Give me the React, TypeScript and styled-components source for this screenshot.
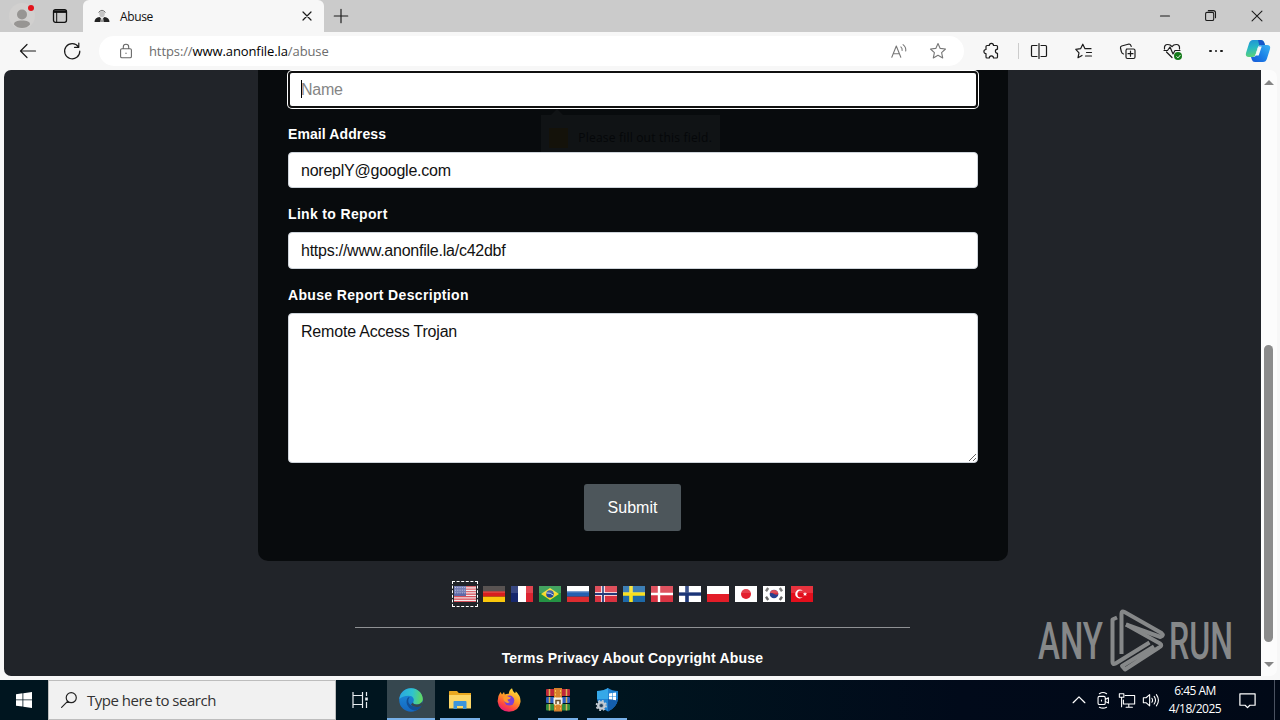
import { ReactNode } from "react";
import styled, { createGlobalStyle, css } from "styled-components";

const ui = `"Open Sans", "Noto Sans", sans-serif`;
const arial = `"Liberation Sans", Arial, sans-serif`;

const flags: { code: string; art: ReactNode }[] = [
  {
    code: "us",
    art: (
      <>
        <rect width="22" height="16" fill="#f4e9ea" />
        {[0, 2.5, 5, 7.5, 10, 12.5, 15].map((y) => (
          <rect key={y} y={y} width="22" height="1.3" fill="#d8505a" />
        ))}
        <rect width="12" height="10" fill="#5f69a8" />
        {[1.5, 4.2, 6.9].map((y) => (
          <path key={y} d={`M1 ${y}h11`} stroke="#b5bada" strokeDasharray="1 1.3" />
        ))}
      </>
    ),
  },
  {
    code: "de",
    art: (
      <>
        <rect width="22" height="6" fill="#3c3634" />
        <rect y="5.3" width="22" height="5.4" fill="#d81f1d" />
        <rect y="10.7" width="22" height="5.3" fill="#fbc80c" />
      </>
    ),
  },
  {
    code: "fr",
    art: (
      <>
        <rect width="22" height="16" fill="#fff" />
        <rect width="7" height="16" fill="#16276c" />
        <rect x="15" width="7" height="16" fill="#dc2431" />
      </>
    ),
  },
  {
    code: "br",
    art: (
      <>
        <rect width="22" height="16" fill="#249344" />
        <path d="M11 2l9 6-9 6-9-6z" fill="#f6db2c" />
        <circle cx="11" cy="8" r="3.8" fill="#28479a" />
        <path d="M7.5 7q4-.5 7 2.2" stroke="#c7dce8" fill="none" />
      </>
    ),
  },
  {
    code: "ru",
    art: (
      <>
        <rect width="22" height="6" fill="#fff" />
        <rect y="5.3" width="22" height="5.4" fill="#2460b0" />
        <rect y="10.7" width="22" height="5.3" fill="#dc2c30" />
      </>
    ),
  },
  { code: "no", art: <Cross bg="#d93240" outer="#fff" inner="#253a79" /> },
  { code: "se", art: <Cross bg="#1d69a8" outer="#f8e020" /> },
  { code: "dk", art: <Cross bg="#d93443" outer="#fff" thin /> },
  { code: "fi", art: <Cross bg="#fff" outer="#1b3577" /> },
  {
    code: "pl",
    art: (
      <>
        <rect width="22" height="8" fill="#fff" />
        <rect y="8" width="22" height="8" fill="#e31d28" />
      </>
    ),
  },
  {
    code: "jp",
    art: (
      <>
        <rect width="22" height="16" fill="#fff" />
        <circle cx="11" cy="8" r="5" fill="#e3212e" />
      </>
    ),
  },
  {
    code: "kr",
    art: (
      <>
        <rect width="22" height="16" fill="#fff" />
        <circle cx="11" cy="8" r="4.3" fill="#28418f" />
        <path d="M6.800 7.300a4.300 4.300 0 018.500 1q-2.300 1-4.200-.3t-4.300-.7z" fill="#d6333f" />
        <path
          d="M3 5.200l2.200-3.200M16.800 2l2.200 3.200M3 10.800l2.200 3.200M16.800 14l2.200-3.200"
          stroke="#666"
          strokeWidth="2.400"
        />
      </>
    ),
  },
  {
    code: "tr",
    art: (
      <>
        <rect width="22" height="16" fill="#e30f1c" />
        <circle cx="8.600" cy="8" r="4.400" fill="#fff" />
        <circle cx="9.900" cy="8" r="3.500" fill="#e30f1c" />
        <path d="M14 5.900l.6 1.400 1.500.1-1.100 1 .3 1.500-1.300-.8-1.300.8.3-1.500-1.100-1 1.500-.1z" fill="#fff" />
      </>
    ),
  },
];

function Cross({ bg, outer, inner, thin }: { bg: string; outer: string; inner?: string; thin?: boolean }) {
  return (
    <>
      <rect width="22" height="16" fill={bg} />
      <path d="M8 0v16M0 8h22" stroke={outer} strokeWidth={thin ? 2.4 : 3.6} />
      {inner && <path d="M8 0v16M0 8h22" stroke={inner} strokeWidth="1.8" />}
    </>
  );
}

const Line = ({ d, size = 20, color = "#1b1b1b", w = 1.2 }: { d: string; size?: number; color?: string; w?: number }) => (
  <svg
    width={size}
    height={size}
    viewBox="0 0 20 20"
    fill="none"
    stroke={color}
    strokeWidth={w}
    strokeLinecap="round"
    strokeLinejoin="round"
  >
    <path d={d} />
  </svg>
);

const STAR = "M10 2.500l2.200 4.900 5.300.6-3.900 3.600 1.100 5.300L10 14.300l-4.700 2.600 1.100-5.300L2.500 8l5.300-.6z";

const ProfileIcon = () => (
  <svg width="28" height="28" viewBox="0 0 28 28">
    <circle cx="14" cy="14" r="13" fill="#d1d0cf" />
    <circle cx="14" cy="12.500" r="5" fill="#979593" />
    <path d="M6 22.500c0-3 3-4 8-4s8 1 8 4q-3 3.500-8 3.500t-8-3.500z" fill="#979593" />
    <circle cx="23" cy="6" r="3" fill="#e3131b" />
  </svg>
);

const Favicon = () => (
  <svg width="16" height="16" viewBox="0 0 16 16">
    <path d="M.5 14c0-3 2-4.500 5-5l2.500 2 2.500-2c3 .5 5 2 5 5z" fill="#222" />
    <path d="M5 4.500q3-3 6 0l-.6 3.200L8 10.500 5.600 7.700z" fill="#c4c4c4" />
    <path d="M4.500 4.500L6 3q2-1.500 4 0l1.500 1.500" stroke="#777" fill="none" />
    <path d="M7 9h2l.6 5H6.400z" fill="#e9e9e9" />
    <path d="M8 10l.7 3.500-.7.500-.7-.5z" fill="#444" />
  </svg>
);

const Copilot = () => (
  <svg width="26" height="26" viewBox="0 0 26 26">
    <defs>
      <linearGradient id="cpA" x1="0" y1="0" x2="0.200" y2="1">
        <stop offset="0" stopColor="#1f8fd8" />
        <stop offset=".5" stopColor="#27b8c4" />
        <stop offset="1" stopColor="#5bd17a" />
      </linearGradient>
      <linearGradient id="cpB" x1="1" y1="0" x2="0" y2="1">
        <stop offset="0" stopColor="#3cb4f2" />
        <stop offset=".5" stopColor="#1c83e8" />
        <stop offset="1" stopColor="#1656d6" />
      </linearGradient>
    </defs>
    <path d="M8 2h8q2.500 0 3.200 2.500L20 7h-4q-2.500 0-3.300 2.500L10.800 16q-.9 3-3.500 3H4q-4 0-3-4L4 5.500Q5 2 8 2z" fill="url(#cpA)" />
    <path d="M13 2h3q2.500 0 3.200 2.500L20 7h-4q-1 0-1.700.6z" fill="#1756c8" />
    <path d="M18 24h-8q-2.500 0-3.200-2.500L6 19h2q2.500 0 3.300-2.500L13.200 10q.9-3 3.500-3H22q4 0 3 4l-3 9.500Q21 24 18 24z" fill="url(#cpB)" />
    <path d="M13.500 8.500h3.200l-3 9H10.200z" fill="#f7f7f7" />
  </svg>
);

const EdgeLogo = () => (
  <svg width="24" height="24" viewBox="0 0 24 24">
    <defs>
      <linearGradient id="edA" x1="0" y1=".3" x2="1" y2=".4">
        <stop offset="0" stopColor="#2aa6e0" />
        <stop offset=".55" stopColor="#2fc3cf" />
        <stop offset="1" stopColor="#63d85c" />
      </linearGradient>
      <linearGradient id="edB" x1="0" y1="0" x2="0" y2="1">
        <stop offset="0" stopColor="#1d8fdc" />
        <stop offset="1" stopColor="#1467c0" />
      </linearGradient>
    </defs>
    <circle cx="12" cy="12" r="11.800" fill="url(#edB)" />
    <path d="M.3 11C1.200 4.500 6 .2 12 .2c6.500 0 11.800 5 11.800 10.800 0 3.500-2.800 5.500-6 5.500-2.800 0-4.300-1.200-3.600-2.300 1.800-2.800-.2-6.400-4.400-6.400-4.500 0-7.600 1.500-9.500 3.200z" fill="url(#edA)" />
    <path d="M9.300 9.300c-3.300 3-2.300 11 6 13.200 3 .2 6-2 7.400-5-6.500 3-13.500 0-13.400-4.500 0-1.600.6-2.700 1.600-3.400z" fill="#124f96" />
    <path d="M14.200 14.200c-.7 1.100.8 2.300 3.600 2.300 2.500 0 4.800-1.200 5.600-3.200v3.900c-4 2.800-9.600 2-11.500-.7z" fill="#36474f" />
  </svg>
);

const FolderIcon = () => (
  <svg width="22" height="20" viewBox="0 0 22 20">
    <path d="M0 1.500Q0 1 .6 1H8l1.800 2H22v15H0z" fill="#e9a820" />
    <path d="M0 5h22v13.500H0z" fill="#fcd667" />
    <path d="M4.500 19V12q0-1 1-1h11q1 0 1 1v7H14v-3H8v3z" fill="#3d94dc" />
  </svg>
);

const FirefoxIcon = () => (
  <svg width="24" height="24" viewBox="0 0 24 24">
    <defs>
      <linearGradient id="ffA" x1=".8" y1="0" x2=".3" y2="1">
        <stop offset="0" stopColor="#ffe83f" />
        <stop offset=".45" stopColor="#ff9a26" />
        <stop offset=".75" stopColor="#ff4a3e" />
        <stop offset="1" stopColor="#e5187c" />
      </linearGradient>
    </defs>
    <path d="M3.500 4l1.500 2.500 2-2.500.8 2.500q2-1 4-.8Q12 2 15 .3q.5 3 3 5 .8-.5.7-2Q24 8 23.500 14 22 23.500 12 23.800 2 23.500.6 13.500.5 8 3.500 4z" fill="url(#ffA)" />
    <circle cx="12.300" cy="12.600" r="5" fill="#7b3fd6" />
    <path d="M6.500 9q3-1.800 5.500 0l2 .5q-1 2-3.500 2 0 2 2.500 2.500-3 2-5.500-.5-1.500-2-1-4.500z" fill="#ff9a2c" />
  </svg>
);

const WinrarIcon = () => (
  <svg width="24" height="24" viewBox="0 0 24 24">
    <rect y="1" width="24" height="7" rx="1" fill="#c0283a" />
    <rect y="9" width="24" height="6" rx="1" fill="#2c5fc0" />
    <rect y="16" width="24" height="6.500" rx="1" fill="#2f8c3e" />
    <path
      d="M3.500 1v7M20.500 1v7M3.500 9v6M20.500 9v6M3.500 16v6.500M20.500 16v6.500"
      stroke="#d9b455"
      strokeWidth="1.500"
    />
    <rect x="8" width="8" height="23.500" fill="#d7812c" />
    <path d="M9.500 2v20M14.500 2v20" stroke="#f5c352" strokeDasharray="2 1.500" />
    <rect x="7.500" y="9.500" width="9" height="7" rx="1" fill="#f3f0e5" />
    <path d="M10 16v-3.500h4V16" stroke="#6b4e28" strokeWidth="1.500" fill="none" />
  </svg>
);

const DefenderIcon = () => (
  <svg width="24" height="24" viewBox="0 0 24 24">
    <path d="M13 0q4 3 10 3v8q-1 8-10 12.500Q3 19 2 11V3q7 0 11-3z" fill="#2083d3" />
    <path d="M13 0v11H2V3q7 0 11-3z" fill="#35a8e8" />
    <path d="M13 11h10q-1 8-10 12.500z" fill="#145fae" />
    <path d="M14 5.500l3-.5v3h-3zM17.600 4.900l3.400-.5V8h-3.400zM14 8.600h3v3l-3-.4zM17.600 8.600H21v3.600l-3.400-.5z" fill="#fff" />
    <circle cx="6.300" cy="17.500" r="3.300" fill="#8e9aa5" stroke="#c5ccd3" strokeWidth="2" />
    <circle cx="6.300" cy="17.500" r="4.800" fill="none" stroke="#c5ccd3" strokeWidth="1.600" strokeDasharray="2 1.770" />
    <circle cx="6.300" cy="17.500" r="1.500" fill="#20415f" />
  </svg>
);

const Watermark = () => (
  <svg width="222" height="64" viewBox="0 0 222 64" overflow="visible">
    <g fill="#868889" fontFamily="Roboto, sans-serif" fontSize="51" fontWeight="500">
      <text x="-1" y="50" textLength="65" lengthAdjust="spacingAndGlyphs">ANY</text>
      <text x="130" y="50" textLength="64" lengthAdjust="spacingAndGlyphs">RUN</text>
    </g>
    <g fill="none" stroke="#868889" strokeWidth="4" strokeLinejoin="round">
      <path d="M78 8.500l-4.500 2V53q0 3 3 1.500l34-21" />
      <path d="M82.500 45V4.500q0-3 3-1.500l37 21q3 2.500-1 4L87 15.500" />
      <path d="M87 15.500l34 19q3 2-1 4L86 60.500l-3-3.500 32-19.500" />
    </g>
  </svg>
);

export default function App() {
  return (
    <Screen>
      <GlobalStyle />
      <TabStrip>
        <ProfileButton>
          <ProfileIcon />
        </ProfileButton>
        <TabActions>
          <svg width="16" height="16" viewBox="0 0 16 16" fill="none" stroke="#111" strokeWidth="1.300">
            <rect x="1.500" y="1.700" width="13" height="12.600" rx="2" />
            <path d="M1.500 3.600h13" strokeWidth="2.600" />
            <path d="M4.700 4v10" strokeWidth="1" />
          </svg>
        </TabActions>
        <Tab>
          <Favicon />
          <TabTitle>Abuse</TabTitle>
          <Line d="M5 5l10 10M15 5L5 15" size={16} w={1.5} />
        </Tab>
        <NewTab>
          <Line d="M10 2.500v15M2.500 10h15" size={18} w={1.3} />
        </NewTab>
        <WindowButtons>
          <Line d="M5 10h10" size={18} />
          <Line d="M4 7.500q0-1.500 1.500-1.500h6q1.500 0 1.500 1.500v6q0 1.500-1.500 1.500h-6Q4 15 4 13.500zM7 4h5.500Q15 4 15 6.500V12" size={18} />
          <Line d="M4.500 4.500l11 11M15.500 4.500l-11 11" size={18} />
        </WindowButtons>
      </TabStrip>

      <Toolbar>
        <NavButtons>
          <Line d="M17.500 10H2.500M9 3.500L2.500 10 9 16.500" size={20} />
          <Line d="M16.500 6A7.600 7.600 0 1017.800 10M16.800 2v4.300h-4.300" size={20} />
        </NavButtons>
        <AddressBar>
          <Line
            d="M5.500 7.500h9q1.500 0 1.500 1.500v7q0 1.500-1.500 1.500h-9Q4 17.500 4 16V9q0-1.500 1.500-1.500zM7 7.500V5.500a3 3 0 016 0v2M10 12.300v.4"
            size={18}
            color="#666"
          />
          <Url>
            https://<b>www.anonfile.la</b>/abuse
          </Url>
          <Line
            d="M2 17L7 4.500l5 12.500M3.700 13h6.600M12 5.500q1.800 1.500 1.500 4M14.500 3q3.500 2.800 3 7"
            size={18}
            color="#777"
          />
          <Line d={STAR} size={20} color="#777" w={1.1} />
        </AddressBar>
        <ToolButtons>
          <Line d="M6 4.500h2.300a2.100 2.100 0 014.200 0H15.500q1 0 1 1v2.700a2.100 2.100 0 000 4.200V16q0 1-1 1h-3a2.100 2.100 0 00-4.200 0H6q-1 0-1-1v-3.300a2.100 2.100 0 010-4.200v-3q0-1 1-1z" />
          <Divider />
          <Line d="M8 4.500H3.500Q2.500 4.500 2.500 5.500v9q0 1 1 1H8M12 4.500h4.500q1 0 1 1v9q0 1-1 1H12M10 2.500v15" />
          <Line d="M8 14.500l-4 2.200 1-4.900L1.800 8.300l4.800-.6L8.800 3.200l2.200 4.500h6M12.500 11.500h5M11.500 15h6" />
          <Line d="M8.500 8h7q1.500 0 1.500 1.500v6.500q0 1.500-1.500 1.500H9.500Q8 17.500 8 16V9.500Q8 8 9.500 8M12.500 10.200v5M10 12.700h5M5.500 13Q3.700 12.500 3.300 10.500L2.500 7q-.3-1.500 1.200-2L11 3q1.700 0 2.200 2.500" />
          <HealthIcon>
            <Line d="M10 16.500L4.500 11M2.500 8Q2 3.500 5.700 3.500 8.500 3.500 10 5.700 11.500 3.500 14.300 3.500q3.700 0 3.200 4.500M2 9.500h3.500L8 6l3 7 2-3.500h5" />
            <i>
              <Line d="M5 10.500l3.500 3.500L15 6.500" size={7} color="#fff" w={2.5} />
            </i>
          </HealthIcon>
          <Dots>
            <span />
            <span />
            <span />
          </Dots>
        </ToolButtons>
        <Copilot />
      </Toolbar>

      <Viewport>
        <Page>
          <Card>
            <NameField>
              <Input placeholder="Name" $focused />
              <Caret />
            </NameField>
            <Label>Email Address</Label>
            <Input defaultValue="noreplY@google.com" />
            <Label>Link to Report</Label>
            <Input defaultValue="https://www.anonfile.la/c42dbf" />
            <Label>Abuse Report Description</Label>
            <TextArea defaultValue="Remote Access Trojan" />
            <Submit>Submit</Submit>
            <Hint>
              <span />
              Please fill out this field.
            </Hint>
          </Card>
          <Flags>
            {flags.map(({ code, art }, i) => (
              <FlagLink key={code} $active={i === 0}>
                <svg width="22" height="16" viewBox="0 0 22 16">
                  {art}
                  <rect width="22" height="7" fill="#fff" opacity=".15" />
                </svg>
              </FlagLink>
            ))}
          </Flags>
          <Rule />
          <FooterLinks>
            <a>Terms</a> <a>Privacy</a> <a>About</a> <a>Copyright</a> <a>Abuse</a>
          </FooterLinks>
          <Brand>
            <Watermark />
          </Brand>
        </Page>
        <Scrollbar>
          <Arrow />
          <Thumb />
          <Arrow $down />
        </Scrollbar>
      </Viewport>

      <Taskbar>
        <TaskButton>
          <svg width="16" height="16" viewBox="0 0 16 16" fill="#fff">
            <path d="M0 2.200l6.500-.9v6.200H0zM7.300 1.200L16 0v7.500H7.300zM0 8.300h6.500v6.300L0 13.700zM7.300 8.300H16V16l-8.700-1.200z" />
          </svg>
        </TaskButton>
        <Search>
          <Line
            d="M12.500 1.800a5.600 5.600 0 110 11.200 5.600 5.600 0 010-11.200zM8.400 11.500L1.800 18.200"
            size={18}
            color="#222"
            w={1.3}
          />
          <span>Type here to search</span>
        </Search>
        <TaskButton>
          <svg width="18" height="18" viewBox="0 0 18 18" fill="none" stroke="#e8edf0" strokeWidth="1.200">
            <path d="M2 1v3.500h9.500V1M2 17v-3.500h9.500V17M2 4.500v9M11.500 4.500v9M15.500 1v4M15.500 11v6" />
            <path d="M15.500 6.500v3" strokeWidth="2.600" />
          </svg>
        </TaskButton>
        <Apps>
          <TaskButton $active $open>
            <EdgeLogo />
          </TaskButton>
          <TaskButton $open>
            <FolderIcon />
          </TaskButton>
          <TaskButton>
            <FirefoxIcon />
          </TaskButton>
          <TaskButton $open>
            <WinrarIcon />
          </TaskButton>
          <TaskButton $open>
            <DefenderIcon />
          </TaskButton>
        </Apps>
        <Tray>
          <Line d="M3.500 13L10 6.500l6.500 6.500" size={18} color="#fff" w={1.4} />
          <Line
            d="M6 6h5q1.500 0 1.500 1.500v6Q12.500 15 11 15H6q-1.500 0-1.500-1.500v-6Q4.500 6 6 6M12.500 9.500l3.500-2v6l-3.500-2M8.300 10v1M6 3q4-2.500 8 0M6 18q4 2 8 0"
            size={18}
            color="#fff"
          />
          <Line d="M8 5h10.500v9.500H6V10M12 14.500V18M9 18h7M1.500 3h5v4h-5zM4 7v10.500" size={18} color="#fff" />
          <Line
            d="M1.500 7.500h3L8.500 4v12.500L4.500 13h-3zM11 8q1.500 2.300 0 4.500M13.500 6q3 4.300 0 8.500M16 4q4.500 6.300 0 12.500"
            size={18}
            color="#fff"
          />
        </Tray>
        <Clock>
          <span>6:45 AM</span>
          <span>4/18/2025</span>
        </Clock>
        <Notifications>
          <Line d="M2 3h16v12h-5.500L10 17.500 7.500 15H2z" size={19} color="#fff" w={1.3} />
        </Notifications>
      </Taskbar>
    </Screen>
  );
}

const GlobalStyle = createGlobalStyle`
  * { box-sizing: border-box; }
  body { margin: 0; overflow: hidden; }
  svg { display: block; flex: none; }
`;

const Screen = styled.div`
  display: flex;
  flex-direction: column;
  width: 1280px;
  height: 720px;
  background: #f7f7f7;
  font-family: ${ui};
`;

const Row = styled.div`
  display: flex;
  align-items: center;
`;

const TabStrip = styled(Row)`
  height: 32px;
  background: #cbcbcb;
`;

const ProfileButton = styled.div`
  padding-left: 8px;
`;

const TabActions = styled.div`
  padding-left: 16px;
  width: 47px;
`;

const Tab = styled(Row)`
  width: 241px;
  height: 32px;
  padding: 0 9px 0 11px;
  gap: 10px;
  background: #f7f7f7;
  border-radius: 6px 6px 0 0;
`;

const TabTitle = styled.span`
  flex: 1;
  font-size: 12px;
  letter-spacing: -0.35px;
  color: #111;
`;

const NewTab = styled.div`
  padding-left: 8px;
`;

const WindowButtons = styled(Row)`
  margin-left: auto;
  padding-right: 14px;
  gap: 28px;
`;

const Toolbar = styled(Row)`
  height: 38px;
  padding: 0 9px 0 18px;
`;

const NavButtons = styled(Row)`
  width: 81px;
  gap: 24px;
`;

const AddressBar = styled(Row)`
  width: 865px;
  height: 30px;
  padding: 0 16px 0 18px;
  border-radius: 15px;
  background: #fff;

  svg:last-child {
    margin-left: 20px;
  }
`;

const Url = styled.span`
  flex: 1;
  padding-left: 14px;
  font-size: 13px;
  letter-spacing: -0.1px;
  color: #6d6d6d;

  b {
    font-weight: 400;
    color: #000;
  }
`;

const ToolButtons = styled(Row)`
  flex: 1;
  padding-left: 17px;
  gap: 24px;
`;

const Divider = styled.div`
  width: 1px;
  height: 16px;
  margin: 0 -14px 0 -7px;
  background: #ccc;

  & + svg {
    margin-right: 1px;
  }
`;

const HealthIcon = styled.div`
  position: relative;

  i {
    position: absolute;
    right: 0;
    bottom: 1px;
    display: grid;
    place-items: center;
    width: 8px;
    height: 8px;
    border-radius: 50%;
    background: #157a1b;
  }
`;

const Dots = styled(Row)`
  width: 20px;
  gap: 3px;
  justify-content: center;

  span {
    width: 2.5px;
    height: 2.5px;
    border-radius: 50%;
    background: #1b1b1b;
  }
`;

const Viewport = styled.div`
  display: flex;
  width: 1273px;
  height: 606px;
  margin: 0 0 4px 4px;
  border-radius: 7px;
  overflow: hidden;
  background: #fcfcfc;
`;

const Page = styled.div`
  position: relative;
  display: flex;
  flex-direction: column;
  align-items: center;
  width: 1257px;
  background: #212429;
  font-family: ${arial};
`;

const Card = styled.div`
  position: relative;
  display: flex;
  flex-direction: column;
  align-items: center;
  width: 750px;
  height: 491px;
  margin-left: 1px;
  padding: 0.9px 30px 30px;
  border-radius: 0 0 10px 10px;
  background: #080b0d;
`;

const field = css`
  display: block;
  width: 690px;
  padding: 1px 12px 0;
  border: 1px solid #ced4da;
  border-radius: 4px;
  background: #fff;
  color: #111;
  font: 16px ${arial};
  letter-spacing: -0.24px;
  outline: none;
`;

const Input = styled.input<{ $focused?: boolean }>`
  ${field}
  height: 36.5px;

  ${({ $focused }) =>
    $focused &&
    css`
      height: 37px;
      padding-left: 11px;
      border: 2px solid #101010;
      box-shadow: 0 0 0 1px #fff;
    `}

  &::placeholder {
    color: #858585;
  }
`;

const NameField = styled.div`
  position: relative;
`;

const Caret = styled.span`
  position: absolute;
  left: 13px;
  top: 9px;
  width: 1px;
  height: 18px;
  background: #000;
`;

const Label = styled.label`
  align-self: flex-start;
  height: 44px;
  padding-top: 18px;
  font-size: 14px;
  font-weight: 700;
  line-height: 17px;
  letter-spacing: 0.34px;
  color: #fff;

  &:first-of-type {
    letter-spacing: 0.1px;
  }
`;

const TextArea = styled.textarea`
  ${field}
  height: 150px;
  padding: 9px 12px;
  letter-spacing: -0.2px;
`;

const Submit = styled.button`
  width: 97px;
  height: 47px;
  margin-top: 21px;
  margin-right: 2px;
  padding: 1px 0 0 1px;
  border: 0;
  border-radius: 3px;
  background: #4d565b;
  color: #fff;
  font: 16px ${arial};
`;

/* validation bubble, almost faded out */
const Hint = styled.div`
  position: absolute;
  left: 283px;
  top: 45px;
  display: flex;
  align-items: center;
  gap: 10px;
  width: 179px;
  height: 37px;
  padding: 8px 8px 0;
  background: #101315;
  color: #050709;
  font: 12px ${ui};
  letter-spacing: 0.2px;
  white-space: nowrap;

  &::before {
    content: "";
    position: absolute;
    left: 10px;
    top: -6px;
    border: 6px solid transparent;
    border-top: 0;
    border-bottom-color: #101315;
  }

  span {
    width: 20px;
    height: 20px;
    background: #14120a;
  }
`;

const Flags = styled.div`
  display: flex;
  gap: 4px;
  margin-top: 21px;
  margin-left: 2px;
`;

const FlagLink = styled.a<{ $active?: boolean }>`
  display: grid;
  place-items: center;
  width: 24px;
  height: 24px;

  ${({ $active }) =>
    $active &&
    css`
      margin: 0 1px 0 -1px;
      outline: 1px dashed #fff;
    `}
`;

const Rule = styled.div`
  width: 555px;
  height: 1px;
  margin-top: 21px;
  background: #8f9194;
`;

const FooterLinks = styled.div`
  margin-top: 22px;
  font-size: 14px;
  font-weight: 700;
  line-height: 17px;
  letter-spacing: 0.2px;
  color: #fff;
`;

const Brand = styled.div`
  position: absolute;
  right: 0;
  bottom: 3px;
`;

const Scrollbar = styled.div`
  display: flex;
  flex-direction: column;
  align-items: center;
  justify-content: space-between;
  width: 15px;
  padding: 10px 0 9px;
`;

const Thumb = styled.div`
  width: 9px;
  height: 297px;
  margin-top: 240px;
  border-radius: 5px;
  background: #8b8b8b;
`;

const Arrow = styled.div<{ $down?: boolean }>`
  border: 5px solid transparent;

  ${({ $down }) =>
    $down
      ? css`
          border-bottom: 0;
          border-top-color: #858585;
        `
      : css`
          border-top: 0;
          border-bottom-color: #858585;
        `}
`;

const Taskbar = styled.div`
  display: flex;
  height: 40px;
  background: linear-gradient(90deg, #00151f 0, #00151f 48%, #010a1a 75%, #010917);
`;

const TaskButton = styled.div<{ $active?: boolean; $open?: boolean }>`
  display: flex;
  align-items: center;
  justify-content: center;
  width: 48px;
  height: 40px;
  background: ${({ $active }) => ($active ? "#36474f" : "none")};

  ${({ $open, $active }) =>
    $open &&
    css`
      background-image: linear-gradient(#77b0e8, #77b0e8);
      background-repeat: no-repeat;
      background-position: bottom;
      background-size: ${$active ? 48 : 40}px 2px;
    `}
`;

const Search = styled(Row)`
  width: 288px;
  padding-left: 11px;
  gap: 9px;
  border: 1px solid #bdbdbd;
  background: #f1f1f1;
  color: #333;
  font-size: 15px;

  span {
    letter-spacing: -0.48px;
  }
`;

const Apps = styled.div`
  display: flex;
  gap: 1px;
  margin-left: 3px;
`;

const Tray = styled(Row)`
  margin-left: auto;
  gap: 6px;
`;

const Clock = styled.div`
  display: flex;
  flex-direction: column;
  justify-content: center;
  align-items: center;
  width: 68px;
  padding-left: 2px;
  color: #fff;
  font-size: 12px;
  line-height: 18px;
  letter-spacing: -0.5px;
`;

const Notifications = styled.div`
  display: flex;
  align-items: center;
  width: 47px;
  margin-right: 5px;
  padding-left: 10px;
  border-right: 1px solid #4a5261;
`;
